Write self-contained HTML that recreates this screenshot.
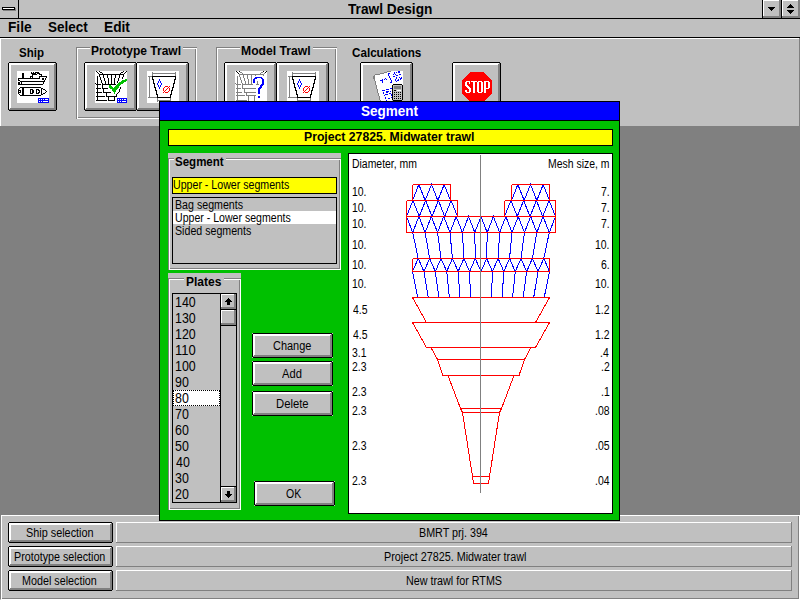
<!DOCTYPE html>
<html><head><meta charset="utf-8"><style>
html,body{margin:0;padding:0}
body{width:800px;height:600px;overflow:hidden;position:relative;background:#c0c0c0;font-family:"Liberation Sans",sans-serif}
body>div,body>span,body>svg{position:absolute;box-sizing:content-box}
.t{white-space:nowrap;line-height:1;transform-origin:0 0}
.cp{width:1px;height:1px;background:#c0c0c0}
</style></head><body>
<div style="left:18px;top:0px;width:1px;height:18px;background:#000;"></div>
<div style="left:2px;top:7px;width:13px;height:3px;background:#000;"></div>
<div style="left:3px;top:8px;width:11px;height:1px;background:#fff;"></div>
<div style="left:3px;top:10px;width:13px;height:1px;background:#808080;"></div>
<div style="left:15px;top:8px;width:1px;height:3px;background:#808080;"></div>
<div style="left:0px;top:18px;width:800px;height:1px;background:#000;"></div>
<span class="t" id="title" style="left:348.00px;top:2.00px;font-size:14px;font-weight:bold;color:#000;transform:scaleX(0.9767)">Trawl Design</span>
<div style="left:762px;top:0px;width:1px;height:18px;background:#000;"></div>
<div style="left:763px;top:0px;width:18px;height:18px;background:#c0c0c0;box-shadow:inset -2px -2px 0 #808080, inset 1px 1px 0 #fff"></div>
<div style="left:781px;top:0px;width:1px;height:18px;background:#000;"></div>
<div style="left:782px;top:0px;width:18px;height:18px;background:#c0c0c0;box-shadow:inset -2px -2px 0 #808080, inset 1px 1px 0 #fff"></div>
<svg style="left:763px;top:0px" width="37" height="18" shape-rendering="crispEdges"><path d="M5 7h7v1h-1v1h-1v1h-1v1h-1v-1h-1v-1h-1v-1h-1z" fill="#000"/><path d="M27 4h1v1h1v1h1v1h1v1h-7v-1h1v-1h1v-1h1z M24 10h7v1h-1v1h-1v1h-1v1h-1v-1h-1v-1h-1v-1h-1z" fill="#000"/></svg>
<span class="t" id="m_file" style="left:8.02px;top:20.00px;font-size:14px;font-weight:bold;color:#000;transform:scaleX(0.9783)">File</span>
<span class="t" id="m_select" style="left:48.04px;top:20.00px;font-size:14px;font-weight:bold;color:#000;transform:scaleX(0.9625)">Select</span>
<span class="t" id="m_edit" style="left:104.02px;top:20.00px;font-size:14px;font-weight:bold;color:#000;transform:scaleX(0.9800)">Edit</span>
<div style="left:0px;top:37px;width:800px;height:1px;background:#000;"></div>
<div style="left:0px;top:38px;width:799px;height:1px;background:#fff;"></div>
<div style="left:0px;top:38px;width:1px;height:88px;background:#fff;"></div>
<div style="left:799px;top:38px;width:1px;height:88px;background:#808080;"></div>
<span class="t" id="l_ship" style="left:19.04px;top:47.00px;font-size:12px;font-weight:bold;color:#000;transform:scaleX(0.9600)">Ship</span>
<div style="left:8px;top:62px;width:47px;height:47px;background:#c0c0c0;border:1px solid #000"></div>
<div style="left:9px;top:63px;width:46px;height:1px;background:#fff"></div>
<div style="left:9px;top:64px;width:45px;height:1px;background:#fff"></div>
<div style="left:9px;top:63px;width:1px;height:46px;background:#fff"></div>
<div style="left:10px;top:63px;width:1px;height:45px;background:#fff"></div>
<div style="left:55px;top:63px;width:1px;height:47px;background:#808080"></div>
<div style="left:54px;top:64px;width:1px;height:46px;background:#808080"></div>
<div style="left:9px;top:109px;width:47px;height:1px;background:#808080"></div>
<div style="left:10px;top:108px;width:46px;height:1px;background:#808080"></div>
<div class="cp" style="left:8px;top:62px"></div>
<div class="cp" style="left:56px;top:62px"></div>
<div class="cp" style="left:8px;top:110px"></div>
<div class="cp" style="left:56px;top:110px"></div>
<div style="left:76px;top:47px;width:118px;height:69px;border:1px solid #808080"></div>
<div style="left:196px;top:47px;width:1px;height:1px;background:#808080"></div>
<div style="left:76px;top:118px;width:1px;height:1px;background:#808080"></div>
<div style="left:77px;top:48px;width:118px;height:69px;border:1px solid #fff"></div>
<div style="left:90px;top:47px;width:93px;height:2px;background:#c0c0c0;"></div>
<span class="t" id="l_proto" style="left:91.00px;top:45.00px;font-size:12px;font-weight:bold;color:#000">Prototype Trawl</span>
<div style="left:84px;top:62px;width:51px;height:47px;background:#c0c0c0;border:1px solid #000"></div>
<div style="left:85px;top:63px;width:50px;height:1px;background:#fff"></div>
<div style="left:85px;top:64px;width:49px;height:1px;background:#fff"></div>
<div style="left:85px;top:63px;width:1px;height:46px;background:#fff"></div>
<div style="left:86px;top:63px;width:1px;height:45px;background:#fff"></div>
<div style="left:135px;top:63px;width:1px;height:47px;background:#808080"></div>
<div style="left:134px;top:64px;width:1px;height:46px;background:#808080"></div>
<div style="left:85px;top:109px;width:51px;height:1px;background:#808080"></div>
<div style="left:86px;top:108px;width:50px;height:1px;background:#808080"></div>
<div class="cp" style="left:84px;top:62px"></div>
<div class="cp" style="left:136px;top:62px"></div>
<div class="cp" style="left:84px;top:110px"></div>
<div class="cp" style="left:136px;top:110px"></div>
<div style="left:136px;top:62px;width:51px;height:47px;background:#c0c0c0;border:1px solid #000"></div>
<div style="left:137px;top:63px;width:50px;height:1px;background:#fff"></div>
<div style="left:137px;top:64px;width:49px;height:1px;background:#fff"></div>
<div style="left:137px;top:63px;width:1px;height:46px;background:#fff"></div>
<div style="left:138px;top:63px;width:1px;height:45px;background:#fff"></div>
<div style="left:187px;top:63px;width:1px;height:47px;background:#808080"></div>
<div style="left:186px;top:64px;width:1px;height:46px;background:#808080"></div>
<div style="left:137px;top:109px;width:51px;height:1px;background:#808080"></div>
<div style="left:138px;top:108px;width:50px;height:1px;background:#808080"></div>
<div class="cp" style="left:136px;top:62px"></div>
<div class="cp" style="left:188px;top:62px"></div>
<div class="cp" style="left:136px;top:110px"></div>
<div class="cp" style="left:188px;top:110px"></div>
<div style="left:216px;top:47px;width:118px;height:69px;border:1px solid #808080"></div>
<div style="left:336px;top:47px;width:1px;height:1px;background:#808080"></div>
<div style="left:216px;top:118px;width:1px;height:1px;background:#808080"></div>
<div style="left:217px;top:48px;width:118px;height:69px;border:1px solid #fff"></div>
<div style="left:240px;top:47px;width:73px;height:2px;background:#c0c0c0;"></div>
<span class="t" id="l_model" style="left:240.99px;top:45.00px;font-size:12px;font-weight:bold;color:#000;transform:scaleX(1.0149)">Model Trawl</span>
<div style="left:224px;top:62px;width:51px;height:47px;background:#c0c0c0;border:1px solid #000"></div>
<div style="left:225px;top:63px;width:50px;height:1px;background:#fff"></div>
<div style="left:225px;top:64px;width:49px;height:1px;background:#fff"></div>
<div style="left:225px;top:63px;width:1px;height:46px;background:#fff"></div>
<div style="left:226px;top:63px;width:1px;height:45px;background:#fff"></div>
<div style="left:275px;top:63px;width:1px;height:47px;background:#808080"></div>
<div style="left:274px;top:64px;width:1px;height:46px;background:#808080"></div>
<div style="left:225px;top:109px;width:51px;height:1px;background:#808080"></div>
<div style="left:226px;top:108px;width:50px;height:1px;background:#808080"></div>
<div class="cp" style="left:224px;top:62px"></div>
<div class="cp" style="left:276px;top:62px"></div>
<div class="cp" style="left:224px;top:110px"></div>
<div class="cp" style="left:276px;top:110px"></div>
<div style="left:276px;top:62px;width:51px;height:47px;background:#c0c0c0;border:1px solid #000"></div>
<div style="left:277px;top:63px;width:50px;height:1px;background:#fff"></div>
<div style="left:277px;top:64px;width:49px;height:1px;background:#fff"></div>
<div style="left:277px;top:63px;width:1px;height:46px;background:#fff"></div>
<div style="left:278px;top:63px;width:1px;height:45px;background:#fff"></div>
<div style="left:327px;top:63px;width:1px;height:47px;background:#808080"></div>
<div style="left:326px;top:64px;width:1px;height:46px;background:#808080"></div>
<div style="left:277px;top:109px;width:51px;height:1px;background:#808080"></div>
<div style="left:278px;top:108px;width:50px;height:1px;background:#808080"></div>
<div class="cp" style="left:276px;top:62px"></div>
<div class="cp" style="left:328px;top:62px"></div>
<div class="cp" style="left:276px;top:110px"></div>
<div class="cp" style="left:328px;top:110px"></div>
<span class="t" id="l_calc" style="left:352.03px;top:47.00px;font-size:12px;font-weight:bold;color:#000;transform:scaleX(0.9714)">Calculations</span>
<div style="left:360px;top:62px;width:51px;height:47px;background:#c0c0c0;border:1px solid #000"></div>
<div style="left:361px;top:63px;width:50px;height:1px;background:#fff"></div>
<div style="left:361px;top:64px;width:49px;height:1px;background:#fff"></div>
<div style="left:361px;top:63px;width:1px;height:46px;background:#fff"></div>
<div style="left:362px;top:63px;width:1px;height:45px;background:#fff"></div>
<div style="left:411px;top:63px;width:1px;height:47px;background:#808080"></div>
<div style="left:410px;top:64px;width:1px;height:46px;background:#808080"></div>
<div style="left:361px;top:109px;width:51px;height:1px;background:#808080"></div>
<div style="left:362px;top:108px;width:50px;height:1px;background:#808080"></div>
<div class="cp" style="left:360px;top:62px"></div>
<div class="cp" style="left:412px;top:62px"></div>
<div class="cp" style="left:360px;top:110px"></div>
<div class="cp" style="left:412px;top:110px"></div>
<div style="left:452px;top:62px;width:47px;height:47px;background:#c0c0c0;border:1px solid #000"></div>
<div style="left:453px;top:63px;width:46px;height:1px;background:#fff"></div>
<div style="left:453px;top:64px;width:45px;height:1px;background:#fff"></div>
<div style="left:453px;top:63px;width:1px;height:46px;background:#fff"></div>
<div style="left:454px;top:63px;width:1px;height:45px;background:#fff"></div>
<div style="left:499px;top:63px;width:1px;height:47px;background:#808080"></div>
<div style="left:498px;top:64px;width:1px;height:46px;background:#808080"></div>
<div style="left:453px;top:109px;width:47px;height:1px;background:#808080"></div>
<div style="left:454px;top:108px;width:46px;height:1px;background:#808080"></div>
<div class="cp" style="left:452px;top:62px"></div>
<div class="cp" style="left:500px;top:62px"></div>
<div class="cp" style="left:452px;top:110px"></div>
<div class="cp" style="left:500px;top:110px"></div>
<svg style="left:17px;top:71px" width="32" height="32" shape-rendering="crispEdges"><path fill="#ffffff" d="M0 0h32v1h-32zM0 1h14v1h-14zM15 1h1v1h-1zM17 1h1v1h-1zM22 1h10v1h-10zM0 2h5v1h-5zM7 2h7v1h-7zM19 2h1v1h-1zM23 2h9v1h-9zM0 3h5v1h-5zM7 3h8v1h-8zM20 3h2v1h-2zM25 3h7v1h-7zM0 4h5v1h-5zM7 4h8v1h-8zM16 4h8v1h-8zM25 4h7v1h-7zM0 5h5v1h-5zM7 5h6v1h-6zM16 5h6v1h-6zM30 5h2v1h-2zM0 6h5v1h-5zM7 6h6v1h-6zM14 6h1v1h-1zM16 6h6v1h-6zM23 6h6v1h-6zM30 6h2v1h-2zM0 7h1v1h-1zM23 7h2v1h-2zM27 7h1v1h-1zM29 7h3v1h-3zM0 8h1v1h-1zM2 8h23v1h-23zM27 8h1v1h-1zM29 8h3v1h-3zM0 9h1v1h-1zM3 9h24v1h-24zM28 9h4v1h-4zM0 10h3v1h-3zM28 10h4v1h-4zM0 11h1v1h-1zM3 11h1v1h-1zM5 11h21v1h-21zM27 11h5v1h-5zM0 12h1v1h-1zM3 12h1v1h-1zM5 12h21v1h-21zM27 12h5v1h-5zM0 13h1v1h-1zM26 13h6v1h-6zM0 14h32v1h-32zM0 15h32v1h-32zM0 16h3v1h-3zM24 16h8v1h-8zM0 17h2v1h-2zM3 17h2v1h-2zM7 17h17v1h-17zM26 17h6v1h-6zM0 18h1v1h-1zM2 18h3v1h-3zM7 18h6v1h-6zM16 18h3v1h-3zM22 18h2v1h-2zM25 18h1v1h-1zM28 18h4v1h-4zM0 19h1v1h-1zM4 19h1v1h-1zM7 19h6v1h-6zM14 19h1v1h-1zM17 19h2v1h-2zM20 19h1v1h-1zM23 19h1v1h-1zM25 19h3v1h-3zM29 19h3v1h-3zM0 20h1v1h-1zM2 20h1v1h-1zM4 20h1v1h-1zM7 20h6v1h-6zM14 20h1v1h-1zM17 20h2v1h-2zM20 20h2v1h-2zM23 20h1v1h-1zM25 20h4v1h-4zM30 20h2v1h-2zM0 21h1v1h-1zM4 21h1v1h-1zM7 21h6v1h-6zM14 21h1v1h-1zM17 21h2v1h-2zM20 21h1v1h-1zM23 21h1v1h-1zM25 21h3v1h-3zM29 21h3v1h-3zM0 22h1v1h-1zM2 22h3v1h-3zM7 22h6v1h-6zM16 22h3v1h-3zM22 22h2v1h-2zM25 22h1v1h-1zM28 22h4v1h-4zM0 23h2v1h-2zM3 23h2v1h-2zM7 23h17v1h-17zM26 23h6v1h-6zM0 24h3v1h-3zM24 24h8v1h-8zM0 25h32v1h-32zM0 26h32v1h-32zM0 27h21v1h-21zM0 28h21v1h-21zM22 28h1v1h-1zM24 28h1v1h-1zM26 28h1v1h-1zM28 28h3v1h-3zM0 29h21v1h-21zM0 30h21v1h-21zM22 30h1v1h-1zM24 30h1v1h-1zM26 30h5v1h-5zM0 31h21v1h-21z"/><path fill="#000000" d="M14 1h1v1h-1zM16 1h1v1h-1zM18 1h4v1h-4zM5 2h2v1h-2zM14 2h5v1h-5zM20 2h3v1h-3zM5 3h2v1h-2zM15 3h5v1h-5zM22 3h3v1h-3zM5 4h2v1h-2zM15 4h1v1h-1zM24 4h1v1h-1zM5 5h2v1h-2zM13 5h3v1h-3zM22 5h8v1h-8zM5 6h2v1h-2zM13 6h1v1h-1zM15 6h1v1h-1zM22 6h1v1h-1zM29 6h1v1h-1zM1 7h22v1h-22zM25 7h2v1h-2zM28 7h1v1h-1zM1 8h1v1h-1zM25 8h2v1h-2zM28 8h1v1h-1zM1 9h2v1h-2zM27 9h1v1h-1zM3 10h25v1h-25zM1 11h2v1h-2zM4 11h1v1h-1zM26 11h1v1h-1zM1 12h2v1h-2zM4 12h1v1h-1zM26 12h1v1h-1zM1 13h25v1h-25zM3 16h21v1h-21zM2 17h1v1h-1zM5 17h2v1h-2zM24 17h2v1h-2zM1 18h1v1h-1zM5 18h2v1h-2zM13 18h3v1h-3zM19 18h3v1h-3zM24 18h1v1h-1zM26 18h2v1h-2zM1 19h3v1h-3zM5 19h2v1h-2zM13 19h1v1h-1zM15 19h2v1h-2zM19 19h1v1h-1zM21 19h2v1h-2zM24 19h1v1h-1zM28 19h1v1h-1zM1 20h1v1h-1zM3 20h1v1h-1zM5 20h2v1h-2zM13 20h1v1h-1zM15 20h2v1h-2zM19 20h1v1h-1zM22 20h1v1h-1zM24 20h1v1h-1zM29 20h1v1h-1zM1 21h3v1h-3zM5 21h2v1h-2zM13 21h1v1h-1zM15 21h2v1h-2zM19 21h1v1h-1zM21 21h2v1h-2zM24 21h1v1h-1zM28 21h1v1h-1zM1 22h1v1h-1zM5 22h2v1h-2zM13 22h3v1h-3zM19 22h3v1h-3zM24 22h1v1h-1zM26 22h2v1h-2zM2 23h1v1h-1zM5 23h2v1h-2zM24 23h2v1h-2zM3 24h21v1h-21z"/><path fill="#0000ff" d="M21 27h11v1h-11zM21 28h1v1h-1zM23 28h1v1h-1zM25 28h1v1h-1zM27 28h1v1h-1zM31 28h1v1h-1zM21 29h11v1h-11zM21 30h1v1h-1zM23 30h1v1h-1zM25 30h1v1h-1zM31 30h1v1h-1zM21 31h11v1h-11z"/></svg>
<svg style="left:95px;top:71px" width="32" height="32" shape-rendering="crispEdges"><path fill="#ffffff" d="M0 0h1v1h-1zM2 0h2v1h-2zM5 0h23v1h-23zM29 0h2v1h-2zM0 1h2v1h-2zM3 1h2v1h-2zM7 1h19v1h-19zM28 1h2v1h-2zM31 1h1v1h-1zM0 2h3v1h-3zM4 2h3v1h-3zM8 2h17v1h-17zM26 2h3v1h-3zM30 2h2v1h-2zM0 3h4v1h-4zM29 3h3v1h-3zM0 4h4v1h-4zM5 4h3v1h-3zM9 4h3v1h-3zM13 4h3v1h-3zM17 4h3v1h-3zM21 4h3v1h-3zM25 4h3v1h-3zM29 4h3v1h-3zM0 5h2v1h-2zM3 5h1v1h-1zM5 5h3v1h-3zM9 5h3v1h-3zM13 5h3v1h-3zM17 5h3v1h-3zM21 5h3v1h-3zM25 5h3v1h-3zM29 5h3v1h-3zM0 6h2v1h-2zM3 6h2v1h-2zM6 6h2v1h-2zM9 6h3v1h-3zM13 6h3v1h-3zM17 6h3v1h-3zM21 6h3v1h-3zM25 6h2v1h-2zM28 6h4v1h-4zM0 7h2v1h-2zM3 7h2v1h-2zM6 7h3v1h-3zM10 7h3v1h-3zM14 7h2v1h-2zM17 7h2v1h-2zM20 7h3v1h-3zM24 7h3v1h-3zM28 7h4v1h-4zM0 8h2v1h-2zM3 8h2v1h-2zM6 8h3v1h-3zM10 8h3v1h-3zM14 8h2v1h-2zM17 8h2v1h-2zM20 8h3v1h-3zM24 8h6v1h-6zM0 9h2v1h-2zM3 9h3v1h-3zM7 9h2v1h-2zM10 9h3v1h-3zM14 9h2v1h-2zM17 9h2v1h-2zM20 9h3v1h-3zM24 9h3v1h-3zM0 10h2v1h-2zM3 10h3v1h-3zM7 10h3v1h-3zM11 10h2v1h-2zM14 10h2v1h-2zM17 10h2v1h-2zM20 10h2v1h-2zM23 10h3v1h-3zM31 10h1v1h-1zM0 11h2v1h-2zM3 11h3v1h-3zM7 11h3v1h-3zM11 11h2v1h-2zM14 11h2v1h-2zM17 11h2v1h-2zM20 11h2v1h-2zM23 11h1v1h-1zM29 11h3v1h-3zM1 12h1v1h-1zM3 12h4v1h-4zM8 12h2v1h-2zM11 12h2v1h-2zM14 12h2v1h-2zM17 12h2v1h-2zM20 12h3v1h-3zM28 12h4v1h-4zM0 13h1v1h-1zM6 13h1v1h-1zM21 13h1v1h-1zM26 13h6v1h-6zM0 14h2v1h-2zM3 14h4v1h-4zM8 14h6v1h-6zM16 14h5v1h-5zM25 14h7v1h-7zM0 15h2v1h-2zM3 15h4v1h-4zM8 15h6v1h-6zM17 15h3v1h-3zM24 15h8v1h-8zM0 16h2v1h-2zM3 16h4v1h-4zM8 16h6v1h-6zM18 16h1v1h-1zM24 16h1v1h-1zM26 16h6v1h-6zM0 17h1v1h-1zM6 17h1v1h-1zM13 17h2v1h-2zM23 17h2v1h-2zM26 17h6v1h-6zM0 18h2v1h-2zM3 18h5v1h-5zM9 18h8v1h-8zM22 18h2v1h-2zM25 18h7v1h-7zM0 19h2v1h-2zM3 19h5v1h-5zM9 19h8v1h-8zM21 19h3v1h-3zM25 19h7v1h-7zM0 20h2v1h-2zM3 20h5v1h-5zM9 20h9v1h-9zM21 20h3v1h-3zM25 20h7v1h-7zM0 21h1v1h-1zM7 21h1v1h-1zM16 21h3v1h-3zM20 21h3v1h-3zM24 21h8v1h-8zM0 22h2v1h-2zM3 22h8v1h-8zM12 22h7v1h-7zM20 22h2v1h-2zM23 22h9v1h-9zM0 23h2v1h-2zM3 23h8v1h-8zM12 23h9v1h-9zM22 23h10v1h-10zM0 24h2v1h-2zM3 24h8v1h-8zM12 24h9v1h-9zM22 24h10v1h-10zM0 25h1v1h-1zM10 25h1v1h-1zM22 25h10v1h-10zM0 26h2v1h-2zM3 26h10v1h-10zM14 26h5v1h-5zM20 26h12v1h-12zM0 27h2v1h-2zM3 27h10v1h-10zM14 27h5v1h-5zM20 27h2v1h-2zM0 28h2v1h-2zM3 28h10v1h-10zM14 28h5v1h-5zM20 28h2v1h-2zM23 28h1v1h-1zM25 28h1v1h-1zM27 28h1v1h-1zM29 28h2v1h-2zM0 29h1v1h-1zM12 29h1v1h-1zM20 29h2v1h-2zM0 30h22v1h-22zM23 30h1v1h-1zM25 30h1v1h-1zM27 30h4v1h-4zM0 31h22v1h-22z"/><path fill="#000000" d="M1 0h1v1h-1zM4 0h1v1h-1zM28 0h1v1h-1zM31 0h1v1h-1zM2 1h1v1h-1zM5 1h2v1h-2zM26 1h2v1h-2zM30 1h1v1h-1zM3 2h1v1h-1zM7 2h1v1h-1zM25 2h1v1h-1zM29 2h1v1h-1zM4 3h25v1h-25zM4 4h1v1h-1zM8 4h1v1h-1zM12 4h1v1h-1zM16 4h1v1h-1zM20 4h1v1h-1zM24 4h1v1h-1zM28 4h1v1h-1zM2 5h1v1h-1zM4 5h1v1h-1zM8 5h1v1h-1zM12 5h1v1h-1zM16 5h1v1h-1zM20 5h1v1h-1zM24 5h1v1h-1zM28 5h1v1h-1zM2 6h1v1h-1zM5 6h1v1h-1zM8 6h1v1h-1zM12 6h1v1h-1zM16 6h1v1h-1zM20 6h1v1h-1zM24 6h1v1h-1zM27 6h1v1h-1zM2 7h1v1h-1zM5 7h1v1h-1zM9 7h1v1h-1zM13 7h1v1h-1zM16 7h1v1h-1zM19 7h1v1h-1zM23 7h1v1h-1zM27 7h1v1h-1zM2 8h1v1h-1zM5 8h1v1h-1zM9 8h1v1h-1zM13 8h1v1h-1zM16 8h1v1h-1zM19 8h1v1h-1zM23 8h1v1h-1zM2 9h1v1h-1zM6 9h1v1h-1zM9 9h1v1h-1zM13 9h1v1h-1zM16 9h1v1h-1zM19 9h1v1h-1zM23 9h1v1h-1zM2 10h1v1h-1zM6 10h1v1h-1zM10 10h1v1h-1zM13 10h1v1h-1zM16 10h1v1h-1zM19 10h1v1h-1zM22 10h1v1h-1zM2 11h1v1h-1zM6 11h1v1h-1zM10 11h1v1h-1zM13 11h1v1h-1zM16 11h1v1h-1zM19 11h1v1h-1zM22 11h1v1h-1zM0 12h1v1h-1zM2 12h1v1h-1zM7 12h1v1h-1zM10 12h1v1h-1zM13 12h1v1h-1zM16 12h1v1h-1zM19 12h1v1h-1zM1 13h5v1h-5zM7 13h14v1h-14zM2 14h1v1h-1zM7 14h1v1h-1zM2 15h1v1h-1zM7 15h1v1h-1zM2 16h1v1h-1zM7 16h1v1h-1zM25 16h1v1h-1zM1 17h5v1h-5zM7 17h6v1h-6zM25 17h1v1h-1zM2 18h1v1h-1zM8 18h1v1h-1zM24 18h1v1h-1zM2 19h1v1h-1zM8 19h1v1h-1zM24 19h1v1h-1zM2 20h1v1h-1zM8 20h1v1h-1zM24 20h1v1h-1zM1 21h6v1h-6zM8 21h8v1h-8zM23 21h1v1h-1zM2 22h1v1h-1zM11 22h1v1h-1zM22 22h1v1h-1zM2 23h1v1h-1zM11 23h1v1h-1zM21 23h1v1h-1zM2 24h1v1h-1zM11 24h1v1h-1zM21 24h1v1h-1zM1 25h9v1h-9zM11 25h11v1h-11zM2 26h1v1h-1zM13 26h1v1h-1zM19 26h1v1h-1zM2 27h1v1h-1zM13 27h1v1h-1zM19 27h1v1h-1zM2 28h1v1h-1zM13 28h1v1h-1zM19 28h1v1h-1zM1 29h11v1h-11zM13 29h7v1h-7z"/><path fill="#00c000" d="M30 8h2v1h-2zM27 9h5v1h-5zM26 10h5v1h-5zM24 11h5v1h-5zM23 12h5v1h-5zM22 13h4v1h-4zM14 14h2v1h-2zM21 14h4v1h-4zM14 15h3v1h-3zM20 15h4v1h-4zM14 16h4v1h-4zM19 16h5v1h-5zM15 17h8v1h-8zM17 18h5v1h-5zM17 19h4v1h-4zM18 20h3v1h-3zM19 21h1v1h-1zM19 22h1v1h-1z"/><path fill="#0000ff" d="M22 27h10v1h-10zM22 28h1v1h-1zM24 28h1v1h-1zM26 28h1v1h-1zM28 28h1v1h-1zM31 28h1v1h-1zM22 29h10v1h-10zM22 30h1v1h-1zM24 30h1v1h-1zM26 30h1v1h-1zM31 30h1v1h-1zM22 31h10v1h-10z"/></svg>
<svg style="left:147px;top:71px" width="32" height="32" shape-rendering="crispEdges"><path fill="#ffffff" d="M0 0h32v1h-32zM0 1h5v1h-5zM6 1h22v1h-22zM29 1h3v1h-3zM0 2h5v1h-5zM29 2h3v1h-3zM0 3h5v1h-5zM6 3h22v1h-22zM29 3h3v1h-3zM0 4h5v1h-5zM6 4h22v1h-22zM29 4h3v1h-3zM0 5h1v1h-1zM29 5h3v1h-3zM0 6h2v1h-2zM3 6h2v1h-2zM6 6h22v1h-22zM29 6h3v1h-3zM0 7h2v1h-2zM3 7h2v1h-2zM6 7h22v1h-22zM29 7h3v1h-3zM0 8h2v1h-2zM3 8h2v1h-2zM7 8h5v1h-5zM13 8h14v1h-14zM29 8h3v1h-3zM0 9h2v1h-2zM3 9h3v1h-3zM7 9h5v1h-5zM13 9h14v1h-14zM28 9h4v1h-4zM0 10h2v1h-2zM3 10h3v1h-3zM7 10h4v1h-4zM12 10h1v1h-1zM14 10h13v1h-13zM28 10h4v1h-4zM0 11h2v1h-2zM3 11h3v1h-3zM7 11h4v1h-4zM12 11h1v1h-1zM14 11h13v1h-13zM28 11h4v1h-4zM0 12h2v1h-2zM3 12h3v1h-3zM8 12h2v1h-2zM11 12h3v1h-3zM15 12h11v1h-11zM28 12h4v1h-4zM0 13h2v1h-2zM3 13h4v1h-4zM8 13h2v1h-2zM11 13h3v1h-3zM15 13h11v1h-11zM27 13h5v1h-5zM0 14h2v1h-2zM3 14h4v1h-4zM8 14h3v1h-3zM12 14h1v1h-1zM14 14h12v1h-12zM27 14h5v1h-5zM0 15h2v1h-2zM3 15h4v1h-4zM8 15h3v1h-3zM12 15h1v1h-1zM14 15h4v1h-4zM21 15h1v1h-1zM23 15h3v1h-3zM27 15h5v1h-5zM0 16h2v1h-2zM3 16h4v1h-4zM9 16h3v1h-3zM13 16h4v1h-4zM18 16h3v1h-3zM22 16h3v1h-3zM27 16h5v1h-5zM0 17h2v1h-2zM3 17h5v1h-5zM9 17h3v1h-3zM13 17h3v1h-3zM17 17h3v1h-3zM21 17h1v1h-1zM23 17h2v1h-2zM26 17h6v1h-6zM0 18h2v1h-2zM3 18h5v1h-5zM9 18h7v1h-7zM17 18h2v1h-2zM20 18h2v1h-2zM23 18h2v1h-2zM26 18h6v1h-6zM0 19h2v1h-2zM3 19h5v1h-5zM10 19h6v1h-6zM17 19h1v1h-1zM19 19h3v1h-3zM23 19h1v1h-1zM26 19h6v1h-6zM0 20h2v1h-2zM3 20h6v1h-6zM10 20h7v1h-7zM18 20h3v1h-3zM22 20h2v1h-2zM25 20h7v1h-7zM0 21h2v1h-2zM3 21h6v1h-6zM10 21h6v1h-6zM17 21h1v1h-1zM21 21h3v1h-3zM25 21h7v1h-7zM0 22h2v1h-2zM3 22h6v1h-6zM10 22h14v1h-14zM25 22h7v1h-7zM0 23h2v1h-2zM3 23h6v1h-6zM11 23h12v1h-12zM25 23h7v1h-7zM0 24h2v1h-2zM3 24h7v1h-7zM11 24h12v1h-12zM24 24h8v1h-8zM0 25h2v1h-2zM3 25h7v1h-7zM11 25h12v1h-12zM24 25h8v1h-8zM0 26h1v1h-1zM24 26h8v1h-8zM0 27h10v1h-10zM11 27h12v1h-12zM24 27h8v1h-8zM0 28h10v1h-10zM11 28h12v1h-12zM24 28h8v1h-8zM0 29h10v1h-10zM24 29h8v1h-8zM0 30h10v1h-10zM11 30h21v1h-21zM0 31h32v1h-32z"/><path fill="#808080" d="M5 1h1v1h-1zM28 1h1v1h-1zM5 2h24v1h-24zM5 3h1v1h-1zM28 3h1v1h-1zM5 4h1v1h-1zM28 4h1v1h-1zM1 5h4v1h-4zM2 6h1v1h-1zM2 7h1v1h-1zM2 8h1v1h-1zM2 9h1v1h-1zM2 10h1v1h-1zM2 11h1v1h-1zM2 12h1v1h-1zM2 13h1v1h-1zM2 14h1v1h-1zM2 15h1v1h-1zM2 16h1v1h-1zM2 17h1v1h-1zM2 18h1v1h-1zM2 19h1v1h-1zM2 20h1v1h-1zM2 21h1v1h-1zM2 22h1v1h-1zM2 23h1v1h-1zM2 24h1v1h-1zM2 25h1v1h-1zM1 26h9v1h-9zM10 27h1v1h-1zM23 27h1v1h-1zM10 28h1v1h-1zM23 28h1v1h-1zM10 29h14v1h-14zM10 30h1v1h-1z"/><path fill="#000000" d="M5 5h24v1h-24zM5 6h1v1h-1zM28 6h1v1h-1zM5 7h1v1h-1zM28 7h1v1h-1zM5 8h2v1h-2zM27 8h2v1h-2zM6 9h1v1h-1zM27 9h1v1h-1zM6 10h1v1h-1zM27 10h1v1h-1zM6 11h1v1h-1zM27 11h1v1h-1zM6 12h2v1h-2zM26 12h2v1h-2zM7 13h1v1h-1zM26 13h1v1h-1zM7 14h1v1h-1zM26 14h1v1h-1zM7 15h1v1h-1zM26 15h1v1h-1zM7 16h2v1h-2zM25 16h2v1h-2zM8 17h1v1h-1zM25 17h1v1h-1zM8 18h1v1h-1zM25 18h1v1h-1zM8 19h2v1h-2zM24 19h2v1h-2zM9 20h1v1h-1zM24 20h1v1h-1zM9 21h1v1h-1zM24 21h1v1h-1zM9 22h1v1h-1zM24 22h1v1h-1zM9 23h2v1h-2zM23 23h2v1h-2zM10 24h1v1h-1zM23 24h1v1h-1zM10 25h1v1h-1zM23 25h1v1h-1zM10 26h14v1h-14z"/><path fill="#0000ff" d="M12 8h1v1h-1zM12 9h1v1h-1zM11 10h1v1h-1zM13 10h1v1h-1zM11 11h1v1h-1zM13 11h1v1h-1zM10 12h1v1h-1zM14 12h1v1h-1zM10 13h1v1h-1zM14 13h1v1h-1zM11 14h1v1h-1zM13 14h1v1h-1zM11 15h1v1h-1zM13 15h1v1h-1zM12 16h1v1h-1zM12 17h1v1h-1z"/><path fill="#ff0000" d="M18 15h3v1h-3zM22 15h1v1h-1zM17 16h1v1h-1zM21 16h1v1h-1zM16 17h1v1h-1zM20 17h1v1h-1zM22 17h1v1h-1zM16 18h1v1h-1zM19 18h1v1h-1zM22 18h1v1h-1zM16 19h1v1h-1zM18 19h1v1h-1zM22 19h1v1h-1zM17 20h1v1h-1zM21 20h1v1h-1zM16 21h1v1h-1zM18 21h3v1h-3z"/></svg>
<svg style="left:235px;top:71px" width="32" height="32" shape-rendering="crispEdges"><path fill="#ffffff" d="M0 0h1v1h-1zM2 0h2v1h-2zM5 0h23v1h-23zM29 0h2v1h-2zM0 1h2v1h-2zM3 1h2v1h-2zM7 1h19v1h-19zM28 1h2v1h-2zM31 1h1v1h-1zM0 2h3v1h-3zM4 2h3v1h-3zM8 2h17v1h-17zM26 2h3v1h-3zM30 2h2v1h-2zM0 3h4v1h-4zM29 3h3v1h-3zM0 4h4v1h-4zM5 4h3v1h-3zM9 4h3v1h-3zM13 4h3v1h-3zM17 4h3v1h-3zM21 4h7v1h-7zM29 4h3v1h-3zM0 5h2v1h-2zM3 5h1v1h-1zM5 5h3v1h-3zM9 5h3v1h-3zM13 5h3v1h-3zM17 5h15v1h-15zM0 6h2v1h-2zM3 6h2v1h-2zM6 6h2v1h-2zM9 6h3v1h-3zM13 6h3v1h-3zM17 6h3v1h-3zM27 6h5v1h-5zM0 7h2v1h-2zM3 7h2v1h-2zM6 7h3v1h-3zM10 7h2v1h-2zM13 7h3v1h-3zM17 7h2v1h-2zM22 7h4v1h-4zM28 7h4v1h-4zM0 8h2v1h-2zM3 8h2v1h-2zM6 8h3v1h-3zM10 8h3v1h-3zM14 8h2v1h-2zM17 8h1v1h-1zM20 8h7v1h-7zM29 8h3v1h-3zM0 9h2v1h-2zM3 9h3v1h-3zM7 9h2v1h-2zM10 9h3v1h-3zM14 9h2v1h-2zM17 9h1v1h-1zM20 9h7v1h-7zM29 9h3v1h-3zM0 10h2v1h-2zM3 10h3v1h-3zM7 10h3v1h-3zM11 10h2v1h-2zM14 10h2v1h-2zM17 10h1v1h-1zM20 10h2v1h-2zM23 10h4v1h-4zM29 10h3v1h-3zM0 11h2v1h-2zM3 11h3v1h-3zM7 11h3v1h-3zM11 11h2v1h-2zM14 11h2v1h-2zM17 11h1v1h-1zM20 11h2v1h-2zM23 11h4v1h-4zM29 11h3v1h-3zM1 12h1v1h-1zM3 12h4v1h-4zM8 12h2v1h-2zM11 12h2v1h-2zM14 12h2v1h-2zM17 12h5v1h-5zM23 12h4v1h-4zM29 12h3v1h-3zM0 13h1v1h-1zM6 13h1v1h-1zM18 13h3v1h-3zM24 13h2v1h-2zM29 13h3v1h-3zM0 14h2v1h-2zM3 14h4v1h-4zM8 14h17v1h-17zM28 14h4v1h-4zM0 15h2v1h-2zM3 15h4v1h-4zM8 15h17v1h-17zM27 15h5v1h-5zM0 16h2v1h-2zM3 16h4v1h-4zM8 16h16v1h-16zM27 16h5v1h-5zM0 17h1v1h-1zM6 17h1v1h-1zM21 17h2v1h-2zM26 17h6v1h-6zM0 18h2v1h-2zM3 18h6v1h-6zM10 18h13v1h-13zM25 18h7v1h-7zM0 19h2v1h-2zM3 19h6v1h-6zM10 19h13v1h-13zM25 19h7v1h-7zM0 20h2v1h-2zM3 20h6v1h-6zM10 20h13v1h-13zM25 20h7v1h-7zM0 21h1v1h-1zM7 21h2v1h-2zM21 21h2v1h-2zM25 21h7v1h-7zM0 22h2v1h-2zM3 22h8v1h-8zM12 22h11v1h-11zM25 22h7v1h-7zM0 23h2v1h-2zM3 23h8v1h-8zM12 23h20v1h-20zM0 24h1v1h-1zM10 24h1v1h-1zM21 24h11v1h-11zM0 25h2v1h-2zM3 25h10v1h-10zM14 25h5v1h-5zM20 25h3v1h-3zM25 25h7v1h-7zM0 26h2v1h-2zM3 26h10v1h-10zM14 26h5v1h-5zM20 26h3v1h-3zM25 26h7v1h-7zM0 27h2v1h-2zM3 27h10v1h-10zM14 27h5v1h-5zM20 27h12v1h-12zM0 28h2v1h-2zM3 28h10v1h-10zM14 28h5v1h-5zM20 28h12v1h-12zM0 29h1v1h-1zM12 29h1v1h-1zM14 29h5v1h-5zM20 29h12v1h-12zM0 30h32v1h-32zM0 31h32v1h-32z"/><path fill="#000000" d="M1 0h1v1h-1zM4 0h1v1h-1zM28 0h1v1h-1zM31 0h1v1h-1zM2 1h1v1h-1zM30 1h1v1h-1zM3 2h1v1h-1z"/><path fill="#808080" d="M5 1h2v1h-2zM26 1h2v1h-2zM7 2h1v1h-1zM25 2h1v1h-1zM29 2h1v1h-1zM4 3h25v1h-25zM4 4h1v1h-1zM8 4h1v1h-1zM12 4h1v1h-1zM16 4h1v1h-1zM20 4h1v1h-1zM28 4h1v1h-1zM2 5h1v1h-1zM4 5h1v1h-1zM8 5h1v1h-1zM12 5h1v1h-1zM16 5h1v1h-1zM2 6h1v1h-1zM5 6h1v1h-1zM8 6h1v1h-1zM12 6h1v1h-1zM16 6h1v1h-1zM2 7h1v1h-1zM5 7h1v1h-1zM9 7h1v1h-1zM12 7h1v1h-1zM16 7h1v1h-1zM2 8h1v1h-1zM5 8h1v1h-1zM9 8h1v1h-1zM13 8h1v1h-1zM16 8h1v1h-1zM2 9h1v1h-1zM6 9h1v1h-1zM9 9h1v1h-1zM13 9h1v1h-1zM16 9h1v1h-1zM2 10h1v1h-1zM6 10h1v1h-1zM10 10h1v1h-1zM13 10h1v1h-1zM16 10h1v1h-1zM22 10h1v1h-1zM2 11h1v1h-1zM6 11h1v1h-1zM10 11h1v1h-1zM13 11h1v1h-1zM16 11h1v1h-1zM22 11h1v1h-1zM0 12h1v1h-1zM2 12h1v1h-1zM7 12h1v1h-1zM10 12h1v1h-1zM13 12h1v1h-1zM16 12h1v1h-1zM22 12h1v1h-1zM1 13h5v1h-5zM7 13h11v1h-11zM21 13h3v1h-3zM2 14h1v1h-1zM7 14h1v1h-1zM2 15h1v1h-1zM7 15h1v1h-1zM2 16h1v1h-1zM7 16h1v1h-1zM1 17h5v1h-5zM7 17h14v1h-14zM2 18h1v1h-1zM9 18h1v1h-1zM2 19h1v1h-1zM9 19h1v1h-1zM2 20h1v1h-1zM9 20h1v1h-1zM1 21h6v1h-6zM9 21h12v1h-12zM2 22h1v1h-1zM11 22h1v1h-1zM2 23h1v1h-1zM11 23h1v1h-1zM1 24h9v1h-9zM11 24h10v1h-10zM2 25h1v1h-1zM13 25h1v1h-1zM19 25h1v1h-1zM2 26h1v1h-1zM13 26h1v1h-1zM19 26h1v1h-1zM2 27h1v1h-1zM13 27h1v1h-1zM19 27h1v1h-1zM2 28h1v1h-1zM13 28h1v1h-1zM19 28h1v1h-1zM1 29h11v1h-11zM13 29h1v1h-1zM19 29h1v1h-1z"/><path fill="#0000ff" d="M20 6h7v1h-7zM19 7h3v1h-3zM26 7h2v1h-2zM18 8h2v1h-2zM27 8h2v1h-2zM18 9h2v1h-2zM27 9h2v1h-2zM18 10h2v1h-2zM27 10h2v1h-2zM18 11h2v1h-2zM27 11h2v1h-2zM27 12h2v1h-2zM26 13h3v1h-3zM25 14h3v1h-3zM25 15h2v1h-2zM24 16h3v1h-3zM23 17h3v1h-3zM23 18h2v1h-2zM23 19h2v1h-2zM23 20h2v1h-2zM23 21h2v1h-2zM23 22h2v1h-2zM23 25h2v1h-2zM23 26h2v1h-2z"/></svg>
<svg style="left:287px;top:71px" width="32" height="32" shape-rendering="crispEdges"><path fill="#ffffff" d="M0 0h32v1h-32zM0 1h5v1h-5zM6 1h22v1h-22zM29 1h3v1h-3zM0 2h5v1h-5zM29 2h3v1h-3zM0 3h5v1h-5zM6 3h22v1h-22zM29 3h3v1h-3zM0 4h5v1h-5zM6 4h22v1h-22zM29 4h3v1h-3zM0 5h1v1h-1zM29 5h3v1h-3zM0 6h2v1h-2zM3 6h2v1h-2zM6 6h22v1h-22zM29 6h3v1h-3zM0 7h2v1h-2zM3 7h2v1h-2zM6 7h22v1h-22zM29 7h3v1h-3zM0 8h2v1h-2zM3 8h2v1h-2zM7 8h5v1h-5zM13 8h14v1h-14zM29 8h3v1h-3zM0 9h2v1h-2zM3 9h3v1h-3zM7 9h5v1h-5zM13 9h14v1h-14zM28 9h4v1h-4zM0 10h2v1h-2zM3 10h3v1h-3zM7 10h4v1h-4zM12 10h1v1h-1zM14 10h13v1h-13zM28 10h4v1h-4zM0 11h2v1h-2zM3 11h3v1h-3zM7 11h4v1h-4zM12 11h1v1h-1zM14 11h13v1h-13zM28 11h4v1h-4zM0 12h2v1h-2zM3 12h3v1h-3zM8 12h2v1h-2zM11 12h3v1h-3zM15 12h11v1h-11zM28 12h4v1h-4zM0 13h2v1h-2zM3 13h4v1h-4zM8 13h2v1h-2zM11 13h3v1h-3zM15 13h11v1h-11zM27 13h5v1h-5zM0 14h2v1h-2zM3 14h4v1h-4zM8 14h3v1h-3zM12 14h1v1h-1zM14 14h12v1h-12zM27 14h5v1h-5zM0 15h2v1h-2zM3 15h4v1h-4zM8 15h3v1h-3zM12 15h1v1h-1zM14 15h4v1h-4zM21 15h1v1h-1zM23 15h3v1h-3zM27 15h5v1h-5zM0 16h2v1h-2zM3 16h4v1h-4zM9 16h3v1h-3zM13 16h4v1h-4zM18 16h3v1h-3zM22 16h3v1h-3zM27 16h5v1h-5zM0 17h2v1h-2zM3 17h5v1h-5zM9 17h3v1h-3zM13 17h3v1h-3zM17 17h3v1h-3zM21 17h1v1h-1zM23 17h2v1h-2zM26 17h6v1h-6zM0 18h2v1h-2zM3 18h5v1h-5zM9 18h7v1h-7zM17 18h2v1h-2zM20 18h2v1h-2zM23 18h2v1h-2zM26 18h6v1h-6zM0 19h2v1h-2zM3 19h5v1h-5zM10 19h6v1h-6zM17 19h1v1h-1zM19 19h3v1h-3zM23 19h1v1h-1zM26 19h6v1h-6zM0 20h2v1h-2zM3 20h6v1h-6zM10 20h7v1h-7zM18 20h3v1h-3zM22 20h2v1h-2zM25 20h7v1h-7zM0 21h2v1h-2zM3 21h6v1h-6zM10 21h6v1h-6zM17 21h1v1h-1zM21 21h3v1h-3zM25 21h7v1h-7zM0 22h2v1h-2zM3 22h6v1h-6zM10 22h14v1h-14zM25 22h7v1h-7zM0 23h2v1h-2zM3 23h6v1h-6zM11 23h12v1h-12zM25 23h7v1h-7zM0 24h2v1h-2zM3 24h7v1h-7zM11 24h12v1h-12zM24 24h8v1h-8zM0 25h2v1h-2zM3 25h7v1h-7zM11 25h12v1h-12zM24 25h8v1h-8zM0 26h1v1h-1zM24 26h8v1h-8zM0 27h10v1h-10zM11 27h12v1h-12zM24 27h8v1h-8zM0 28h10v1h-10zM11 28h12v1h-12zM24 28h8v1h-8zM0 29h10v1h-10zM24 29h8v1h-8zM0 30h10v1h-10zM11 30h21v1h-21zM0 31h32v1h-32z"/><path fill="#808080" d="M5 1h1v1h-1zM28 1h1v1h-1zM5 2h24v1h-24zM5 3h1v1h-1zM28 3h1v1h-1zM5 4h1v1h-1zM28 4h1v1h-1zM1 5h4v1h-4zM2 6h1v1h-1zM2 7h1v1h-1zM2 8h1v1h-1zM2 9h1v1h-1zM2 10h1v1h-1zM2 11h1v1h-1zM2 12h1v1h-1zM2 13h1v1h-1zM2 14h1v1h-1zM2 15h1v1h-1zM2 16h1v1h-1zM2 17h1v1h-1zM2 18h1v1h-1zM2 19h1v1h-1zM2 20h1v1h-1zM2 21h1v1h-1zM2 22h1v1h-1zM2 23h1v1h-1zM2 24h1v1h-1zM2 25h1v1h-1zM1 26h9v1h-9zM10 27h1v1h-1zM23 27h1v1h-1zM10 28h1v1h-1zM23 28h1v1h-1zM10 29h14v1h-14zM10 30h1v1h-1z"/><path fill="#000000" d="M5 5h24v1h-24zM5 6h1v1h-1zM28 6h1v1h-1zM5 7h1v1h-1zM28 7h1v1h-1zM5 8h2v1h-2zM27 8h2v1h-2zM6 9h1v1h-1zM27 9h1v1h-1zM6 10h1v1h-1zM27 10h1v1h-1zM6 11h1v1h-1zM27 11h1v1h-1zM6 12h2v1h-2zM26 12h2v1h-2zM7 13h1v1h-1zM26 13h1v1h-1zM7 14h1v1h-1zM26 14h1v1h-1zM7 15h1v1h-1zM26 15h1v1h-1zM7 16h2v1h-2zM25 16h2v1h-2zM8 17h1v1h-1zM25 17h1v1h-1zM8 18h1v1h-1zM25 18h1v1h-1zM8 19h2v1h-2zM24 19h2v1h-2zM9 20h1v1h-1zM24 20h1v1h-1zM9 21h1v1h-1zM24 21h1v1h-1zM9 22h1v1h-1zM24 22h1v1h-1zM9 23h2v1h-2zM23 23h2v1h-2zM10 24h1v1h-1zM23 24h1v1h-1zM10 25h1v1h-1zM23 25h1v1h-1zM10 26h14v1h-14z"/><path fill="#0000ff" d="M12 8h1v1h-1zM12 9h1v1h-1zM11 10h1v1h-1zM13 10h1v1h-1zM11 11h1v1h-1zM13 11h1v1h-1zM10 12h1v1h-1zM14 12h1v1h-1zM10 13h1v1h-1zM14 13h1v1h-1zM11 14h1v1h-1zM13 14h1v1h-1zM11 15h1v1h-1zM13 15h1v1h-1zM12 16h1v1h-1zM12 17h1v1h-1z"/><path fill="#ff0000" d="M18 15h3v1h-3zM22 15h1v1h-1zM17 16h1v1h-1zM21 16h1v1h-1zM16 17h1v1h-1zM20 17h1v1h-1zM22 17h1v1h-1zM16 18h1v1h-1zM19 18h1v1h-1zM22 18h1v1h-1zM16 19h1v1h-1zM18 19h1v1h-1zM22 19h1v1h-1zM17 20h1v1h-1zM21 20h1v1h-1zM16 21h1v1h-1zM18 21h3v1h-3z"/></svg>
<svg style="left:371px;top:71px" width="32" height="32" shape-rendering="crispEdges"><path fill="#808080" d="M16 0h4v1h-4zM13 1h3v1h-3zM9 2h4v1h-4zM4 3h5v1h-5zM3 4h1v1h-1zM2 5h2v1h-2zM2 6h2v1h-2zM2 7h2v1h-2zM3 8h1v1h-1zM3 9h1v1h-1zM4 10h1v1h-1zM4 11h1v1h-1zM4 12h1v1h-1zM4 13h1v1h-1zM5 14h1v1h-1zM5 15h1v1h-1zM23 15h7v1h-7zM5 16h1v1h-1zM23 16h7v1h-7zM5 17h1v1h-1zM23 17h7v1h-7zM6 18h1v1h-1zM6 19h1v1h-1zM6 20h1v1h-1zM6 21h1v1h-1zM7 22h1v1h-1zM7 23h1v1h-1zM7 24h1v1h-1zM8 25h1v1h-1zM8 26h1v1h-1zM8 27h1v1h-1zM8 28h1v1h-1zM9 29h1v1h-1z"/><path fill="#ffffff" d="M20 0h7v1h-7zM29 0h3v1h-3zM16 1h7v1h-7zM24 1h1v1h-1zM26 1h1v1h-1zM29 1h3v1h-3zM13 2h4v1h-4zM19 2h4v1h-4zM24 2h8v1h-8zM9 3h8v1h-8zM18 3h4v1h-4zM23 3h1v1h-1zM25 3h3v1h-3zM30 3h2v1h-2zM4 4h13v1h-13zM18 4h7v1h-7zM27 4h5v1h-5zM4 5h14v1h-14zM19 5h3v1h-3zM24 5h8v1h-8zM4 6h14v1h-14zM19 6h6v1h-6zM26 6h2v1h-2zM29 6h1v1h-1zM31 6h1v1h-1zM4 7h10v1h-10zM15 7h4v1h-4zM20 7h5v1h-5zM26 7h3v1h-3zM31 7h1v1h-1zM4 8h7v1h-7zM12 8h1v1h-1zM14 8h1v1h-1zM16 8h3v1h-3zM20 8h4v1h-4zM25 8h2v1h-2zM28 8h1v1h-1zM30 8h2v1h-2zM4 9h5v1h-5zM12 9h8v1h-8zM21 9h3v1h-3zM25 9h1v1h-1zM28 9h4v1h-4zM5 10h6v1h-6zM12 10h8v1h-8zM21 10h4v1h-4zM26 10h6v1h-6zM5 11h6v1h-6zM12 11h7v1h-7zM21 11h11v1h-11zM5 12h27v1h-27zM5 13h17v1h-17zM31 13h1v1h-1zM6 14h15v1h-15zM6 15h15v1h-15zM6 16h15v1h-15zM6 17h13v1h-13zM7 18h8v1h-8zM18 18h3v1h-3zM7 19h4v1h-4zM14 19h7v1h-7zM26 19h4v1h-4zM7 20h8v1h-8zM18 20h1v1h-1zM20 20h1v1h-1zM7 21h5v1h-5zM13 21h2v1h-2zM17 21h4v1h-4zM8 22h4v1h-4zM13 22h5v1h-5zM20 22h1v1h-1zM8 23h6v1h-6zM17 23h3v1h-3zM8 24h5v1h-5zM14 24h6v1h-6zM9 25h12v1h-12zM9 26h5v1h-5zM15 26h5v1h-5zM9 27h5v1h-5zM15 27h2v1h-2zM19 27h2v1h-2zM9 28h12v1h-12zM10 29h5v1h-5zM16 29h5v1h-5z"/><path fill="#0000ff" d="M27 0h2v1h-2zM23 1h1v1h-1zM25 1h1v1h-1zM27 1h2v1h-2zM17 2h2v1h-2zM23 2h1v1h-1zM17 3h1v1h-1zM22 3h1v1h-1zM24 3h1v1h-1zM28 3h2v1h-2zM17 4h1v1h-1zM25 4h2v1h-2zM18 5h1v1h-1zM22 5h2v1h-2zM18 6h1v1h-1zM25 6h1v1h-1zM28 6h1v1h-1zM30 6h1v1h-1zM14 7h1v1h-1zM19 7h1v1h-1zM25 7h1v1h-1zM29 7h2v1h-2zM11 8h1v1h-1zM13 8h1v1h-1zM15 8h1v1h-1zM19 8h1v1h-1zM24 8h1v1h-1zM27 8h1v1h-1zM29 8h1v1h-1zM9 9h3v1h-3zM20 9h1v1h-1zM24 9h1v1h-1zM26 9h2v1h-2zM11 10h1v1h-1zM20 10h1v1h-1zM25 10h1v1h-1zM11 11h1v1h-1zM19 11h2v1h-2zM19 17h2v1h-2zM15 18h3v1h-3zM11 19h3v1h-3zM15 20h3v1h-3zM19 20h1v1h-1zM12 21h1v1h-1zM15 21h2v1h-2zM12 22h1v1h-1zM18 22h2v1h-2zM14 23h3v1h-3zM20 23h1v1h-1zM13 24h1v1h-1zM20 24h1v1h-1zM14 26h1v1h-1zM20 26h1v1h-1zM14 27h1v1h-1zM17 27h2v1h-2zM15 29h1v1h-1z"/><path fill="#000000" d="M22 13h9v1h-9zM21 14h1v1h-1zM31 14h1v1h-1zM21 15h1v1h-1zM31 15h1v1h-1zM21 16h1v1h-1zM31 16h1v1h-1zM21 17h1v1h-1zM31 17h1v1h-1zM21 18h1v1h-1zM31 18h1v1h-1zM21 19h1v1h-1zM23 19h2v1h-2zM31 19h1v1h-1zM21 20h1v1h-1zM31 20h1v1h-1zM21 21h1v1h-1zM23 21h1v1h-1zM25 21h1v1h-1zM27 21h1v1h-1zM29 21h1v1h-1zM31 21h1v1h-1zM21 22h1v1h-1zM31 22h1v1h-1zM21 23h1v1h-1zM23 23h1v1h-1zM25 23h1v1h-1zM27 23h1v1h-1zM29 23h1v1h-1zM31 23h1v1h-1zM21 24h1v1h-1zM31 24h1v1h-1zM21 25h1v1h-1zM23 25h1v1h-1zM25 25h1v1h-1zM27 25h1v1h-1zM29 25h1v1h-1zM31 25h1v1h-1zM21 26h1v1h-1zM31 26h1v1h-1zM21 27h1v1h-1zM23 27h1v1h-1zM25 27h1v1h-1zM27 27h1v1h-1zM29 27h1v1h-1zM31 27h1v1h-1zM21 28h1v1h-1zM31 28h1v1h-1zM22 29h9v1h-9z"/><path fill="#c0c0c0" d="M22 14h9v1h-9zM22 15h1v1h-1zM30 15h1v1h-1zM22 16h1v1h-1zM30 16h1v1h-1zM22 17h1v1h-1zM30 17h1v1h-1zM22 18h9v1h-9zM22 19h1v1h-1zM25 19h1v1h-1zM30 19h1v1h-1zM22 20h9v1h-9zM22 21h1v1h-1zM24 21h1v1h-1zM26 21h1v1h-1zM28 21h1v1h-1zM30 21h1v1h-1zM22 22h9v1h-9zM22 23h1v1h-1zM24 23h1v1h-1zM26 23h1v1h-1zM28 23h1v1h-1zM30 23h1v1h-1zM22 24h9v1h-9zM22 25h1v1h-1zM24 25h1v1h-1zM26 25h1v1h-1zM28 25h1v1h-1zM30 25h1v1h-1zM22 26h9v1h-9zM22 27h1v1h-1zM24 27h1v1h-1zM26 27h1v1h-1zM28 27h1v1h-1zM30 27h1v1h-1zM22 28h9v1h-9z"/></svg>
<svg style="left:461px;top:71px" width="32" height="32" shape-rendering="crispEdges"><path fill="#ff0000" d="M9 1h14v1h-14zM8 2h16v1h-16zM7 3h18v1h-18zM6 4h20v1h-20zM5 5h22v1h-22zM4 6h24v1h-24zM3 7h26v1h-26zM2 8h28v1h-28zM1 9h30v1h-30zM1 10h4v1h-4zM9 10h1v1h-1zM16 10h1v1h-1zM21 10h2v1h-2zM28 10h3v1h-3zM1 11h3v1h-3zM6 11h2v1h-2zM9 11h3v1h-3zM14 11h2v1h-2zM18 11h2v1h-2zM22 11h1v1h-1zM25 11h2v1h-2zM29 11h2v1h-2zM1 12h3v1h-3zM6 12h2v1h-2zM9 12h3v1h-3zM14 12h2v1h-2zM18 12h2v1h-2zM22 12h1v1h-1zM25 12h2v1h-2zM29 12h2v1h-2zM1 13h3v1h-3zM6 13h6v1h-6zM14 13h2v1h-2zM18 13h2v1h-2zM22 13h1v1h-1zM25 13h2v1h-2zM29 13h2v1h-2zM1 14h3v1h-3zM7 14h5v1h-5zM14 14h2v1h-2zM18 14h2v1h-2zM22 14h1v1h-1zM25 14h2v1h-2zM29 14h2v1h-2zM1 15h4v1h-4zM8 15h4v1h-4zM14 15h2v1h-2zM18 15h2v1h-2zM22 15h1v1h-1zM25 15h2v1h-2zM29 15h2v1h-2zM1 16h5v1h-5zM9 16h3v1h-3zM14 16h2v1h-2zM18 16h2v1h-2zM22 16h1v1h-1zM25 16h2v1h-2zM29 16h2v1h-2zM1 17h6v1h-6zM10 17h2v1h-2zM14 17h2v1h-2zM18 17h2v1h-2zM22 17h1v1h-1zM28 17h3v1h-3zM1 18h7v1h-7zM10 18h2v1h-2zM14 18h2v1h-2zM18 18h2v1h-2zM22 18h1v1h-1zM25 18h6v1h-6zM1 19h3v1h-3zM6 19h2v1h-2zM10 19h2v1h-2zM14 19h2v1h-2zM18 19h2v1h-2zM22 19h1v1h-1zM25 19h6v1h-6zM1 20h3v1h-3zM6 20h2v1h-2zM10 20h2v1h-2zM14 20h2v1h-2zM18 20h2v1h-2zM22 20h1v1h-1zM25 20h6v1h-6zM1 21h4v1h-4zM9 21h3v1h-3zM14 21h3v1h-3zM21 21h2v1h-2zM25 21h6v1h-6zM1 22h30v1h-30zM2 23h28v1h-28zM3 24h26v1h-26zM4 25h24v1h-24zM5 26h22v1h-22zM6 27h20v1h-20zM7 28h18v1h-18zM8 29h16v1h-16zM9 30h14v1h-14z"/><path fill="#ffffff" d="M5 10h4v1h-4zM10 10h6v1h-6zM17 10h4v1h-4zM23 10h5v1h-5zM4 11h2v1h-2zM8 11h1v1h-1zM12 11h2v1h-2zM16 11h2v1h-2zM20 11h2v1h-2zM23 11h2v1h-2zM27 11h2v1h-2zM4 12h2v1h-2zM8 12h1v1h-1zM12 12h2v1h-2zM16 12h2v1h-2zM20 12h2v1h-2zM23 12h2v1h-2zM27 12h2v1h-2zM4 13h2v1h-2zM12 13h2v1h-2zM16 13h2v1h-2zM20 13h2v1h-2zM23 13h2v1h-2zM27 13h2v1h-2zM4 14h3v1h-3zM12 14h2v1h-2zM16 14h2v1h-2zM20 14h2v1h-2zM23 14h2v1h-2zM27 14h2v1h-2zM5 15h3v1h-3zM12 15h2v1h-2zM16 15h2v1h-2zM20 15h2v1h-2zM23 15h2v1h-2zM27 15h2v1h-2zM6 16h3v1h-3zM12 16h2v1h-2zM16 16h2v1h-2zM20 16h2v1h-2zM23 16h2v1h-2zM27 16h2v1h-2zM7 17h3v1h-3zM12 17h2v1h-2zM16 17h2v1h-2zM20 17h2v1h-2zM23 17h5v1h-5zM8 18h2v1h-2zM12 18h2v1h-2zM16 18h2v1h-2zM20 18h2v1h-2zM23 18h2v1h-2zM4 19h2v1h-2zM8 19h2v1h-2zM12 19h2v1h-2zM16 19h2v1h-2zM20 19h2v1h-2zM23 19h2v1h-2zM4 20h2v1h-2zM8 20h2v1h-2zM12 20h2v1h-2zM16 20h2v1h-2zM20 20h2v1h-2zM23 20h2v1h-2zM5 21h4v1h-4zM12 21h2v1h-2zM17 21h4v1h-4zM23 21h2v1h-2z"/></svg>
<div style="left:0px;top:126px;width:800px;height:389px;background:#808080;"></div>
<div style="left:0px;top:515px;width:800px;height:85px;background:#c0c0c0;"></div>
<div style="left:0px;top:514px;width:800px;height:1px;background:#808080;"></div>
<div style="left:0px;top:514px;width:797px;height:83px;border:1px solid #808080"></div>
<div style="left:1px;top:515px;width:797px;height:83px;border:1px solid #fff"></div>
<div style="left:8px;top:522px;width:103px;height:19px;background:#c0c0c0;border:1px solid #000"></div>
<div style="left:9px;top:523px;width:102px;height:1px;background:#fff"></div>
<div style="left:9px;top:524px;width:101px;height:1px;background:#fff"></div>
<div style="left:9px;top:523px;width:1px;height:18px;background:#fff"></div>
<div style="left:10px;top:523px;width:1px;height:17px;background:#fff"></div>
<div style="left:111px;top:523px;width:1px;height:19px;background:#808080"></div>
<div style="left:110px;top:524px;width:1px;height:18px;background:#808080"></div>
<div style="left:9px;top:541px;width:103px;height:1px;background:#808080"></div>
<div style="left:10px;top:540px;width:102px;height:1px;background:#808080"></div>
<div class="cp" style="left:8px;top:522px"></div>
<div class="cp" style="left:112px;top:522px"></div>
<div class="cp" style="left:8px;top:542px"></div>
<div class="cp" style="left:112px;top:542px"></div>
<div style="left:116px;top:522px;width:676px;height:21px;background:#c0c0c0;box-shadow:inset -1px -1px 0 #808080, inset 1px 1px 0 #fff"></div>
<span class="t" id="b0" style="left:25.60px;top:527.00px;font-size:12px;font-weight:normal;color:#000;transform:scaleX(0.9041)">Ship selection</span>
<span class="t" id="s0" style="left:419.11px;top:527.00px;font-size:12px;font-weight:normal;color:#000;transform:scaleX(0.8947)">BMRT prj. 394</span>
<div style="left:8px;top:546px;width:103px;height:19px;background:#c0c0c0;border:1px solid #000"></div>
<div style="left:9px;top:547px;width:102px;height:1px;background:#fff"></div>
<div style="left:9px;top:548px;width:101px;height:1px;background:#fff"></div>
<div style="left:9px;top:547px;width:1px;height:18px;background:#fff"></div>
<div style="left:10px;top:547px;width:1px;height:17px;background:#fff"></div>
<div style="left:111px;top:547px;width:1px;height:19px;background:#808080"></div>
<div style="left:110px;top:548px;width:1px;height:18px;background:#808080"></div>
<div style="left:9px;top:565px;width:103px;height:1px;background:#808080"></div>
<div style="left:10px;top:564px;width:102px;height:1px;background:#808080"></div>
<div class="cp" style="left:8px;top:546px"></div>
<div class="cp" style="left:112px;top:546px"></div>
<div class="cp" style="left:8px;top:566px"></div>
<div class="cp" style="left:112px;top:566px"></div>
<div style="left:116px;top:546px;width:676px;height:21px;background:#c0c0c0;box-shadow:inset -1px -1px 0 #808080, inset 1px 1px 0 #fff"></div>
<span class="t" id="b1" style="left:14.11px;top:551.00px;font-size:12px;font-weight:normal;color:#000;transform:scaleX(0.8950)">Prototype selection</span>
<span class="t" id="s1" style="left:383.60px;top:551.00px;font-size:12px;font-weight:normal;color:#000;transform:scaleX(0.9006)">Project 27825. Midwater trawl</span>
<div style="left:8px;top:570px;width:103px;height:19px;background:#c0c0c0;border:1px solid #000"></div>
<div style="left:9px;top:571px;width:102px;height:1px;background:#fff"></div>
<div style="left:9px;top:572px;width:101px;height:1px;background:#fff"></div>
<div style="left:9px;top:571px;width:1px;height:18px;background:#fff"></div>
<div style="left:10px;top:571px;width:1px;height:17px;background:#fff"></div>
<div style="left:111px;top:571px;width:1px;height:19px;background:#808080"></div>
<div style="left:110px;top:572px;width:1px;height:18px;background:#808080"></div>
<div style="left:9px;top:589px;width:103px;height:1px;background:#808080"></div>
<div style="left:10px;top:588px;width:102px;height:1px;background:#808080"></div>
<div class="cp" style="left:8px;top:570px"></div>
<div class="cp" style="left:112px;top:570px"></div>
<div class="cp" style="left:8px;top:590px"></div>
<div class="cp" style="left:112px;top:590px"></div>
<div style="left:116px;top:570px;width:676px;height:21px;background:#c0c0c0;box-shadow:inset -1px -1px 0 #808080, inset 1px 1px 0 #fff"></div>
<span class="t" id="b2" style="left:22.10px;top:575.00px;font-size:12px;font-weight:normal;color:#000;transform:scaleX(0.8963)">Model selection</span>
<span class="t" id="s2" style="left:405.60px;top:575.00px;font-size:12px;font-weight:normal;color:#000;transform:scaleX(0.8962)">New trawl for RTMS</span>
<div style="left:159px;top:101px;width:459px;height:418px;background:#00c000;border:1px solid #000"></div>
<div style="left:160px;top:102px;width:459px;height:18px;background:#0000ff;"></div>
<div style="left:160px;top:120px;width:459px;height:1px;background:#000;"></div>
<span class="t" id="d_title" style="left:361.03px;top:104.00px;font-size:14px;font-weight:bold;color:#fff;transform:scaleX(0.9655)">Segment</span>
<div style="left:168px;top:129px;width:443px;height:15px;background:#ffff00;border:1px solid #000"></div>
<span class="t" id="d_proj" style="left:304.48px;top:131.00px;font-size:12px;font-weight:bold;color:#000;transform:scaleX(1.0181)">Project 27825. Midwater trawl</span>
<div style="left:168px;top:153px;width:173px;height:117px;background:#c0c0c0;"></div>
<div style="left:168px;top:158px;width:170px;height:109px;border:1px solid #808080"></div>
<div style="left:340px;top:158px;width:1px;height:1px;background:#808080"></div>
<div style="left:168px;top:269px;width:1px;height:1px;background:#808080"></div>
<div style="left:169px;top:159px;width:170px;height:109px;border:1px solid #fff"></div>
<div style="left:174px;top:158px;width:52px;height:2px;background:#c0c0c0;"></div>
<span class="t" id="g_seg" style="left:175.04px;top:156.00px;font-size:12px;font-weight:bold;color:#000;transform:scaleX(0.9600)">Segment</span>
<div style="left:172px;top:177px;width:163px;height:15px;background:#ffff00;border:1px solid #000"></div>
<span class="t" id="e_seg" style="left:173.12px;top:179.00px;font-size:12px;font-weight:normal;color:#000;transform:scaleX(0.8846)">Upper - Lower segments</span>
<div style="left:172px;top:197px;width:163px;height:65px;background:#c0c0c0;border:1px solid #000"></div>
<div style="left:173px;top:211px;width:163px;height:13px;background:#fff;"></div>
<span class="t" id="li0" style="left:175.11px;top:199.00px;font-size:12px;font-weight:normal;color:#000;transform:scaleX(0.8867)">Bag segments</span>
<span class="t" id="li1" style="left:175.12px;top:212.00px;font-size:12px;font-weight:normal;color:#000;transform:scaleX(0.8808)">Upper - Lower segments</span>
<span class="t" id="li2" style="left:175.11px;top:225.00px;font-size:12px;font-weight:normal;color:#000;transform:scaleX(0.8867)">Sided segments</span>
<div style="left:168px;top:273px;width:73px;height:237px;background:#c0c0c0;"></div>
<div style="left:168px;top:278px;width:70px;height:229px;border:1px solid #808080"></div>
<div style="left:240px;top:278px;width:1px;height:1px;background:#808080"></div>
<div style="left:168px;top:509px;width:1px;height:1px;background:#808080"></div>
<div style="left:169px;top:279px;width:70px;height:229px;border:1px solid #fff"></div>
<div style="left:184px;top:278px;width:40px;height:2px;background:#c0c0c0;"></div>
<span class="t" id="g_plates" style="left:186.00px;top:276.00px;font-size:12px;font-weight:bold;color:#000">Plates</span>
<div style="left:172px;top:293px;width:63px;height:208px;background:#c0c0c0;border:1px solid #000"></div>
<div style="left:220px;top:293px;width:1px;height:210px;background:#000;"></div>
<div style="left:173px;top:390px;width:47px;height:16px;background:#fff;"></div>
<div style="left:173px;top:390px;width:45px;height:14px;border:1px dotted #000"></div>
<span class="t" id="pl0" style="left:174.61px;top:295.00px;font-size:14px;font-weight:normal;color:#000;transform:scaleX(0.8864)">140</span>
<span class="t" id="pl1" style="left:174.61px;top:311.00px;font-size:14px;font-weight:normal;color:#000;transform:scaleX(0.8864)">130</span>
<span class="t" id="pl2" style="left:174.61px;top:327.00px;font-size:14px;font-weight:normal;color:#000;transform:scaleX(0.8864)">120</span>
<span class="t" id="pl3" style="left:174.57px;top:343.00px;font-size:14px;font-weight:normal;color:#000;transform:scaleX(0.9286)">110</span>
<span class="t" id="pl4" style="left:174.61px;top:359.00px;font-size:14px;font-weight:normal;color:#000;transform:scaleX(0.8864)">100</span>
<span class="t" id="pl5" style="left:174.61px;top:375.00px;font-size:14px;font-weight:normal;color:#000;transform:scaleX(0.8864)">90</span>
<span class="t" id="pl6" style="left:174.61px;top:391.00px;font-size:14px;font-weight:normal;color:#000;transform:scaleX(0.8864)">80</span>
<span class="t" id="pl7" style="left:174.61px;top:407.00px;font-size:14px;font-weight:normal;color:#000;transform:scaleX(0.8864)">70</span>
<span class="t" id="pl8" style="left:174.61px;top:423.00px;font-size:14px;font-weight:normal;color:#000;transform:scaleX(0.8864)">60</span>
<span class="t" id="pl9" style="left:174.61px;top:439.00px;font-size:14px;font-weight:normal;color:#000;transform:scaleX(0.8864)">50</span>
<span class="t" id="pl10" style="left:175.50px;top:455.00px;font-size:14px;font-weight:normal;color:#000;transform:scaleX(0.8864)">40</span>
<span class="t" id="pl11" style="left:174.61px;top:471.00px;font-size:14px;font-weight:normal;color:#000;transform:scaleX(0.8864)">30</span>
<span class="t" id="pl12" style="left:174.61px;top:487.00px;font-size:14px;font-weight:normal;color:#000;transform:scaleX(0.8864)">20</span>
<div style="left:221px;top:294px;width:15px;height:15px;background:#c0c0c0;box-shadow:inset -2px -2px 0 #808080, inset 1px 1px 0 #fff"></div>
<div style="left:221px;top:309px;width:15px;height:1px;background:#000;"></div>
<div style="left:221px;top:310px;width:15px;height:15px;background:#c0c0c0;box-shadow:inset -2px -2px 0 #808080, inset 1px 1px 0 #fff"></div>
<div style="left:221px;top:325px;width:15px;height:1px;background:#000;"></div>
<div style="left:221px;top:486px;width:15px;height:1px;background:#000;"></div>
<div style="left:221px;top:487px;width:15px;height:15px;background:#c0c0c0;box-shadow:inset -2px -2px 0 #808080, inset 1px 1px 0 #fff"></div>
<svg style="left:0;top:0" width="800" height="600" shape-rendering="crispEdges"><path fill="#000" d="M228 298h1v1h-1zM227 299h3v1h-3zM226 300h5v1h-5zM225 301h7v1h-7zM227 302h3v1h-3zM227 303h3v1h-3zM227 304h3v1h-3zM227 491h3v1h-3zM227 492h3v1h-3zM227 493h3v1h-3zM225 494h7v1h-7zM226 495h5v1h-5zM227 496h3v1h-3zM228 497h1v1h-1z"/></svg>
<div style="left:252px;top:333px;width:79px;height:23px;background:#c0c0c0;border:1px solid #000"></div>
<div style="left:253px;top:334px;width:78px;height:1px;background:#fff"></div>
<div style="left:253px;top:335px;width:77px;height:1px;background:#fff"></div>
<div style="left:253px;top:334px;width:1px;height:22px;background:#fff"></div>
<div style="left:254px;top:334px;width:1px;height:21px;background:#fff"></div>
<div style="left:331px;top:334px;width:1px;height:23px;background:#808080"></div>
<div style="left:330px;top:335px;width:1px;height:22px;background:#808080"></div>
<div style="left:253px;top:356px;width:79px;height:1px;background:#808080"></div>
<div style="left:254px;top:355px;width:78px;height:1px;background:#808080"></div>
<div class="cp" style="left:252px;top:333px"></div>
<div class="cp" style="left:332px;top:333px"></div>
<div class="cp" style="left:252px;top:357px"></div>
<div class="cp" style="left:332px;top:357px"></div>
<span class="t" id="bt_change" style="left:272.59px;top:340.00px;font-size:12px;font-weight:normal;color:#000;transform:scaleX(0.9125)">Change</span>
<div style="left:252px;top:361px;width:79px;height:23px;background:#c0c0c0;border:1px solid #000"></div>
<div style="left:253px;top:362px;width:78px;height:1px;background:#fff"></div>
<div style="left:253px;top:363px;width:77px;height:1px;background:#fff"></div>
<div style="left:253px;top:362px;width:1px;height:22px;background:#fff"></div>
<div style="left:254px;top:362px;width:1px;height:21px;background:#fff"></div>
<div style="left:331px;top:362px;width:1px;height:23px;background:#808080"></div>
<div style="left:330px;top:363px;width:1px;height:22px;background:#808080"></div>
<div style="left:253px;top:384px;width:79px;height:1px;background:#808080"></div>
<div style="left:254px;top:383px;width:78px;height:1px;background:#808080"></div>
<div class="cp" style="left:252px;top:361px"></div>
<div class="cp" style="left:332px;top:361px"></div>
<div class="cp" style="left:252px;top:385px"></div>
<div class="cp" style="left:332px;top:385px"></div>
<span class="t" id="bt_add" style="left:282.00px;top:368.00px;font-size:12px;font-weight:normal;color:#000;transform:scaleX(0.9286)">Add</span>
<div style="left:252px;top:391px;width:79px;height:23px;background:#c0c0c0;border:1px solid #000"></div>
<div style="left:253px;top:392px;width:78px;height:1px;background:#fff"></div>
<div style="left:253px;top:393px;width:77px;height:1px;background:#fff"></div>
<div style="left:253px;top:392px;width:1px;height:22px;background:#fff"></div>
<div style="left:254px;top:392px;width:1px;height:21px;background:#fff"></div>
<div style="left:331px;top:392px;width:1px;height:23px;background:#808080"></div>
<div style="left:330px;top:393px;width:1px;height:22px;background:#808080"></div>
<div style="left:253px;top:414px;width:79px;height:1px;background:#808080"></div>
<div style="left:254px;top:413px;width:78px;height:1px;background:#808080"></div>
<div class="cp" style="left:252px;top:391px"></div>
<div class="cp" style="left:332px;top:391px"></div>
<div class="cp" style="left:252px;top:415px"></div>
<div class="cp" style="left:332px;top:415px"></div>
<span class="t" id="bt_delete" style="left:275.56px;top:398.00px;font-size:12px;font-weight:normal;color:#000;transform:scaleX(0.9394)">Delete</span>
<div style="left:254px;top:481px;width:79px;height:23px;background:#c0c0c0;border:1px solid #000"></div>
<div style="left:255px;top:482px;width:78px;height:1px;background:#fff"></div>
<div style="left:255px;top:483px;width:77px;height:1px;background:#fff"></div>
<div style="left:255px;top:482px;width:1px;height:22px;background:#fff"></div>
<div style="left:256px;top:482px;width:1px;height:21px;background:#fff"></div>
<div style="left:333px;top:482px;width:1px;height:23px;background:#808080"></div>
<div style="left:332px;top:483px;width:1px;height:22px;background:#808080"></div>
<div style="left:255px;top:504px;width:79px;height:1px;background:#808080"></div>
<div style="left:256px;top:503px;width:78px;height:1px;background:#808080"></div>
<div class="cp" style="left:254px;top:481px"></div>
<div class="cp" style="left:334px;top:481px"></div>
<div class="cp" style="left:254px;top:505px"></div>
<div class="cp" style="left:334px;top:505px"></div>
<span class="t" id="bt_ok" style="left:286.12px;top:488.00px;font-size:12px;font-weight:normal;color:#000;transform:scaleX(0.8750)">OK</span>
<div style="left:348px;top:153px;width:263px;height:359px;background:#fff;border:1px solid #000"></div>
<svg style="left:0;top:0" width="800" height="600" shape-rendering="crispEdges"><path d="M412.50 200.50 L418.83 184.50 L425.17 200.50 L431.50 184.50 L437.83 200.50 L444.17 184.50 L450.50 200.50 M511.50 200.50 L517.83 184.50 L524.17 200.50 L530.50 184.50 L536.83 200.50 L543.17 184.50 L549.50 200.50 M406.50 216.50 L412.88 200.50 L419.25 216.50 L425.62 200.50 L432.00 216.50 L438.38 200.50 L444.75 216.50 L451.12 200.50 L457.50 216.50 M504.50 216.50 L510.88 200.50 L517.25 216.50 L523.62 200.50 L530.00 216.50 L536.38 200.50 L542.75 216.50 L549.12 200.50 L555.50 216.50 M406.50 216.50 L412.71 232.50 L418.92 216.50 L425.12 232.50 L431.33 216.50 L437.54 232.50 L443.75 216.50 L449.96 232.50 L456.17 216.50 L462.38 232.50 L468.58 216.50 L474.79 232.50 L481.00 216.50 L487.21 232.50 L493.42 216.50 L499.62 232.50 L505.83 216.50 L512.04 232.50 L518.25 216.50 L524.46 232.50 L530.67 216.50 L536.88 232.50 L543.08 216.50 L549.29 232.50 L555.50 216.50 M412.71 232.50 L418.21 258.50 M425.12 232.50 L429.62 258.50 M437.54 232.50 L441.04 258.50 M449.96 232.50 L452.46 258.50 M462.38 232.50 L463.88 258.50 M474.79 232.50 L475.29 258.50 M487.21 232.50 L486.71 258.50 M499.62 232.50 L498.12 258.50 M512.04 232.50 L509.54 258.50 M524.46 232.50 L520.96 258.50 M536.88 232.50 L532.38 258.50 M549.29 232.50 L543.79 258.50 M412.50 271.50 L418.21 258.50 L423.92 271.50 L429.62 258.50 L435.33 271.50 L441.04 258.50 L446.75 271.50 L452.46 258.50 L458.17 271.50 L463.88 258.50 L469.58 271.50 L475.29 258.50 L481.00 271.50 L486.71 258.50 L492.42 271.50 L498.12 258.50 L503.83 271.50 L509.54 258.50 L515.25 271.50 L520.96 258.50 L526.67 271.50 L532.38 258.50 L538.08 271.50 L543.79 258.50 L549.50 271.50 M412.50 271.50 L417.80 297.50 M423.92 271.50 L428.33 297.50 M435.33 271.50 L438.87 297.50 M446.75 271.50 L449.40 297.50 M458.17 271.50 L459.93 297.50 M469.58 271.50 L470.47 297.50 M480.50 271.50 L480.50 297.50 M492.42 271.50 L491.53 297.50 M503.83 271.50 L502.07 297.50 M515.25 271.50 L512.60 297.50 M526.67 271.50 L523.13 297.50 M538.08 271.50 L533.67 297.50 M549.50 271.50 L544.20 297.50" stroke="#0000ff" fill="none" stroke-width="1"/><path d="M412.50 184.50 L450.50 184.50 L450.50 200.50 L412.50 200.50 L412.50 184.50 M511.50 184.50 L549.50 184.50 L549.50 200.50 L511.50 200.50 L511.50 184.50 M406.50 200.50 L457.50 200.50 L457.50 216.50 L406.50 216.50 L406.50 200.50 M504.50 200.50 L555.50 200.50 L555.50 216.50 L504.50 216.50 L504.50 200.50 M406.50 216.50 L555.50 216.50 L555.50 232.50 L406.50 232.50 L406.50 216.50 M412.50 258.50 L549.50 258.50 L549.50 271.50 L412.50 271.50 L412.50 258.50 M412.50 297.50 L549.50 297.50 L535.50 322.50 L426.50 322.50 L412.50 297.50 M412.50 322.50 L549.50 322.50 L535.50 347.50 L426.50 347.50 L412.50 322.50 M431.00 347.50 L531.00 347.50 L524.50 359.50 L437.50 359.50 L431.00 347.50 M437.50 359.50 L524.50 359.50 L519.00 375.50 L443.00 375.50 L437.50 359.50 M448.00 375.50 L514.00 375.50 L501.50 408.50 L460.50 408.50 L448.00 375.50 M460.50 408.50 L501.50 408.50 L499.50 412.50 L462.50 412.50 L460.50 408.50 M462.50 412.50 L499.50 412.50 L489.50 476.50 L472.50 476.50 L462.50 412.50 M472.50 476.50 L489.50 476.50 L488.50 483.50 L473.50 483.50 L472.50 476.50" stroke="#ff0000" fill="none" stroke-width="1"/><path d="M480.50 154.50 L480.50 492.50" stroke="#808080" fill="none" stroke-width="1"/></svg>
<span class="t" id="c_diam" style="left:352.13px;top:158.00px;font-size:12px;font-weight:normal;color:#000;transform:scaleX(0.8699)">Diameter, mm</span>
<span class="t" id="c_mesh" style="left:548.11px;top:158.00px;font-size:12px;font-weight:normal;color:#000;transform:scaleX(0.8699)">Mesh size, m</span>
<span class="t" id="cl0" style="left:352.13px;top:186.00px;font-size:12px;font-weight:normal;color:#000;transform:scaleX(0.8699)">10.</span>
<span class="t" id="cr0" style="left:601.17px;top:186.00px;font-size:12px;font-weight:normal;color:#000;transform:scaleX(0.8699)">7.</span>
<span class="t" id="cl1" style="left:352.13px;top:202.00px;font-size:12px;font-weight:normal;color:#000;transform:scaleX(0.8699)">10.</span>
<span class="t" id="cr1" style="left:601.17px;top:202.00px;font-size:12px;font-weight:normal;color:#000;transform:scaleX(0.8699)">7.</span>
<span class="t" id="cl2" style="left:352.13px;top:218.00px;font-size:12px;font-weight:normal;color:#000;transform:scaleX(0.8699)">10.</span>
<span class="t" id="cr2" style="left:601.17px;top:218.00px;font-size:12px;font-weight:normal;color:#000;transform:scaleX(0.8699)">7.</span>
<span class="t" id="cl3" style="left:352.13px;top:239.00px;font-size:12px;font-weight:normal;color:#000;transform:scaleX(0.8699)">10.</span>
<span class="t" id="cr3" style="left:595.08px;top:239.00px;font-size:12px;font-weight:normal;color:#000;transform:scaleX(0.8699)">10.</span>
<span class="t" id="cl4" style="left:352.13px;top:259.00px;font-size:12px;font-weight:normal;color:#000;transform:scaleX(0.8699)">10.</span>
<span class="t" id="cr4" style="left:601.17px;top:259.00px;font-size:12px;font-weight:normal;color:#000;transform:scaleX(0.8699)">6.</span>
<span class="t" id="cl5" style="left:352.13px;top:278.00px;font-size:12px;font-weight:normal;color:#000;transform:scaleX(0.8699)">10.</span>
<span class="t" id="cr5" style="left:595.08px;top:278.00px;font-size:12px;font-weight:normal;color:#000;transform:scaleX(0.8699)">10.</span>
<span class="t" id="cl6" style="left:353.00px;top:304.00px;font-size:12px;font-weight:normal;color:#000;transform:scaleX(0.8699)">4.5</span>
<span class="t" id="cr6" style="left:595.08px;top:304.00px;font-size:12px;font-weight:normal;color:#000;transform:scaleX(0.8699)">1.2</span>
<span class="t" id="cl7" style="left:353.00px;top:329.00px;font-size:12px;font-weight:normal;color:#000;transform:scaleX(0.8699)">4.5</span>
<span class="t" id="cr7" style="left:595.08px;top:329.00px;font-size:12px;font-weight:normal;color:#000;transform:scaleX(0.8699)">1.2</span>
<span class="t" id="cl8" style="left:352.13px;top:347.00px;font-size:12px;font-weight:normal;color:#000;transform:scaleX(0.8699)">3.1</span>
<span class="t" id="cr8" style="left:600.30px;top:347.00px;font-size:12px;font-weight:normal;color:#000;transform:scaleX(0.8699)">.4</span>
<span class="t" id="cl9" style="left:352.13px;top:361.00px;font-size:12px;font-weight:normal;color:#000;transform:scaleX(0.8699)">2.3</span>
<span class="t" id="cr9" style="left:601.17px;top:361.00px;font-size:12px;font-weight:normal;color:#000;transform:scaleX(0.8699)">.2</span>
<span class="t" id="cl10" style="left:352.13px;top:386.00px;font-size:12px;font-weight:normal;color:#000;transform:scaleX(0.8699)">2.3</span>
<span class="t" id="cr10" style="left:601.17px;top:386.00px;font-size:12px;font-weight:normal;color:#000;transform:scaleX(0.8699)">.1</span>
<span class="t" id="cl11" style="left:352.13px;top:405.00px;font-size:12px;font-weight:normal;color:#000;transform:scaleX(0.8699)">2.3</span>
<span class="t" id="cr11" style="left:595.08px;top:405.00px;font-size:12px;font-weight:normal;color:#000;transform:scaleX(0.8699)">.08</span>
<span class="t" id="cl12" style="left:352.13px;top:440.00px;font-size:12px;font-weight:normal;color:#000;transform:scaleX(0.8699)">2.3</span>
<span class="t" id="cr12" style="left:595.08px;top:440.00px;font-size:12px;font-weight:normal;color:#000;transform:scaleX(0.8699)">.05</span>
<span class="t" id="cl13" style="left:352.13px;top:475.00px;font-size:12px;font-weight:normal;color:#000;transform:scaleX(0.8699)">2.3</span>
<span class="t" id="cr13" style="left:595.08px;top:475.00px;font-size:12px;font-weight:normal;color:#000;transform:scaleX(0.8699)">.04</span>
</body></html>
